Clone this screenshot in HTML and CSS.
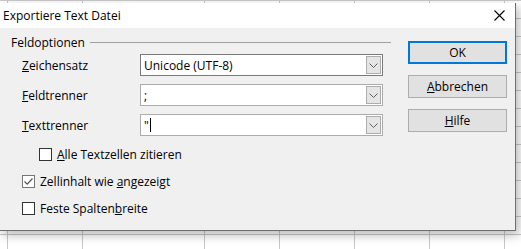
FILE: index.html
```html
<!DOCTYPE html>
<html lang="de">
<head>
  <meta charset="UTF-8">
  <title>Exportiere Text Datei</title>
  <link rel="stylesheet" href="styles.css">
</head>
<body>
  <div class="dialog">
    <div class="titlebar">
      <span class="title">Exportiere Text Datei</span>
      <svg class="close" width="11" height="11" viewBox="0 0 11 11">
        <path d="M0.5 0.5 L10.5 10.5 M10.5 0.5 L0.5 10.5" stroke="#000" stroke-width="1.1" fill="none"/>
      </svg>
    </div>

    <div class="dialog-body">
      <div class="options">
        <div class="group-header">
          <span>Feldoptionen</span>
          <div class="group-line"></div>
        </div>

        <div class="fields">
          <div class="field-row">
            <label class="field-label"><u>Z</u>eichensatz</label>
            <div class="combo combo-focus">
              <span class="combo-text">Unicode (UTF-8)</span>
              <div class="combo-btn"><svg width="9" height="5" viewBox="0 0 9 5"><path d="M0.5 0.5 L4.5 4.5 L8.5 0.5" stroke="#606060" fill="none"/></svg></div>
            </div>
          </div>
          <div class="field-row">
            <label class="field-label"><u>F</u>eldtrenner</label>
            <div class="combo">
              <span class="combo-text">;</span>
              <div class="combo-btn"><svg width="9" height="5" viewBox="0 0 9 5"><path d="M0.5 0.5 L4.5 4.5 L8.5 0.5" stroke="#606060" fill="none"/></svg></div>
            </div>
          </div>
          <div class="field-row">
            <label class="field-label"><u>T</u>exttrenner</label>
            <div class="combo">
              <span class="combo-text">"<span class="caret"></span></span>
              <div class="combo-btn"><svg width="9" height="5" viewBox="0 0 9 5"><path d="M0.5 0.5 L4.5 4.5 L8.5 0.5" stroke="#606060" fill="none"/></svg></div>
            </div>
          </div>
        </div>

        <div class="checks">
          <div class="check-row indent">
            <span class="checkbox"></span>
            <span><u>A</u>lle Textzellen zitieren</span>
          </div>
          <div class="check-row">
            <span class="checkbox checked">
              <svg width="11" height="11" viewBox="0 0 11 11"><path d="M1.5 5.5 L4.2 8.2 L9.5 2.5" stroke="#555" stroke-width="1.2" fill="none"/></svg>
            </span>
            <span>Zellinhalt wie <u>a</u>ngezeigt</span>
          </div>
          <div class="check-row">
            <span class="checkbox"></span>
            <span>Feste Spalten<u>b</u>reite</span>
          </div>
        </div>
      </div>

      <div class="buttons">
        <button class="btn btn-default">OK</button>
        <button class="btn"><u>A</u>bbrechen</button>
        <button class="btn"><u>H</u>ilfe</button>
      </div>
    </div>
  </div>
</body>
</html>
```

FILE: styles.css
```css
/* === SHEET BACKGROUND === */
body {
  margin: 0;
  padding: 0;
  font-family: 'Open Sans', 'Noto Sans', sans-serif;
  font-size: 12px;
  color: #000;
  background-color: #fff;
  background-image:
    linear-gradient(#c8c8c8, #c8c8c8),
    linear-gradient(#c8c8c8, #c8c8c8),
    linear-gradient(#c8c8c8, #c8c8c8),
    linear-gradient(#c8c8c8, #c8c8c8),
    linear-gradient(#c8c8c8, #c8c8c8),
    linear-gradient(#c8c8c8, #c8c8c8),
    linear-gradient(#c8c8c8, #c8c8c8),
    repeating-linear-gradient(to bottom, #c8c8c8 0, #c8c8c8 1px, transparent 1px, transparent 18px);
  background-size: 1px 100%, 1px 100%, 1px 100%, 1px 100%, 1px 100%, 1px 100%, 1px 100%, 100% 100%;
  background-position: 7px 0, 82px 0, 204px 0, 279px 0, 354px 0, 429px 0, 504px 0, 0 0;
  background-repeat: no-repeat;
  height: 249px;
  overflow: hidden;
}

/* === DIALOG WINDOW === */
.dialog {
  margin-top: 3px;
  width: 516px;
  height: 228px;
  box-sizing: border-box;
  background-color: #f0f0f0;
  border-right: 1px solid #6e6e6e;
  border-bottom: 1px solid #6e6e6e;
  box-shadow: 3px 4px 10px rgba(0, 0, 0, 0.28);
}
.titlebar {
  height: 25px;
  background-color: #fff;
  display: flex;
  align-items: center;
  justify-content: space-between;
  padding: 0 10px 0 3px;
}
.title {
  font-size: 12px;
}
.close {
  display: block;
}

.dialog-body {
  display: flex;
  gap: 17px;
  padding-top: 6px;
}

/* === FIELD OPTIONS === */
.options {
  width: 391px;
}
.group-header {
  display: flex;
  align-items: center;
  height: 16px;
  padding-left: 11px;
}
.group-line {
  flex: 1;
  height: 1px;
  margin-left: 5px;
  background-color: #a0a0a0;
}
.fields {
  display: flex;
  flex-direction: column;
  gap: 8px;
  margin-top: 4px;
}
.field-row {
  display: flex;
  align-items: center;
  height: 22px;
  padding-left: 22px;
}
.field-label {
  width: 118px;
}
.combo {
  width: 243px;
  height: 22px;
  box-sizing: border-box;
  border: 1px solid #acacac;
  background-color: #fff;
  display: flex;
  align-items: center;
  justify-content: space-between;
  padding: 0 1px 0 3px;
}
.combo-focus {
  border-color: #7a7a7a;
}
.combo-text {
  display: flex;
  align-items: center;
}
.caret {
  display: inline-block;
  width: 1px;
  height: 14px;
  margin-left: 1px;
  background-color: #000;
}
.combo-btn {
  width: 15px;
  height: 18px;
  box-sizing: border-box;
  border: 1px solid #adadad;
  background-color: #e5e5e5;
  display: flex;
  align-items: center;
  justify-content: center;
}

/* === CHECKBOXES === */
.checks {
  display: flex;
  flex-direction: column;
  gap: 8px;
  margin-top: 9px;
  padding-left: 22px;
}
.check-row {
  display: flex;
  align-items: center;
  gap: 5px;
  height: 19px;
}
.check-row.indent {
  padding-left: 17px;
}
.checkbox {
  width: 13px;
  height: 13px;
  box-sizing: border-box;
  border: 1px solid #333;
  background-color: #fff;
  display: flex;
  align-items: center;
  justify-content: center;
}
.checkbox.checked {
  border-color: #777;
}

/* === BUTTONS === */
.buttons {
  display: flex;
  flex-direction: column;
  gap: 11px;
  padding-top: 7px;
}
.btn {
  width: 99px;
  height: 23px;
  box-sizing: border-box;
  border: 1px solid #adadad;
  background-color: #e1e1e1;
  font-family: 'Open Sans', 'Noto Sans', sans-serif;
  font-size: 12px;
  color: #000;
  padding: 0;
}
.btn-default {
  border: 2px solid #0078d7;
}
```
